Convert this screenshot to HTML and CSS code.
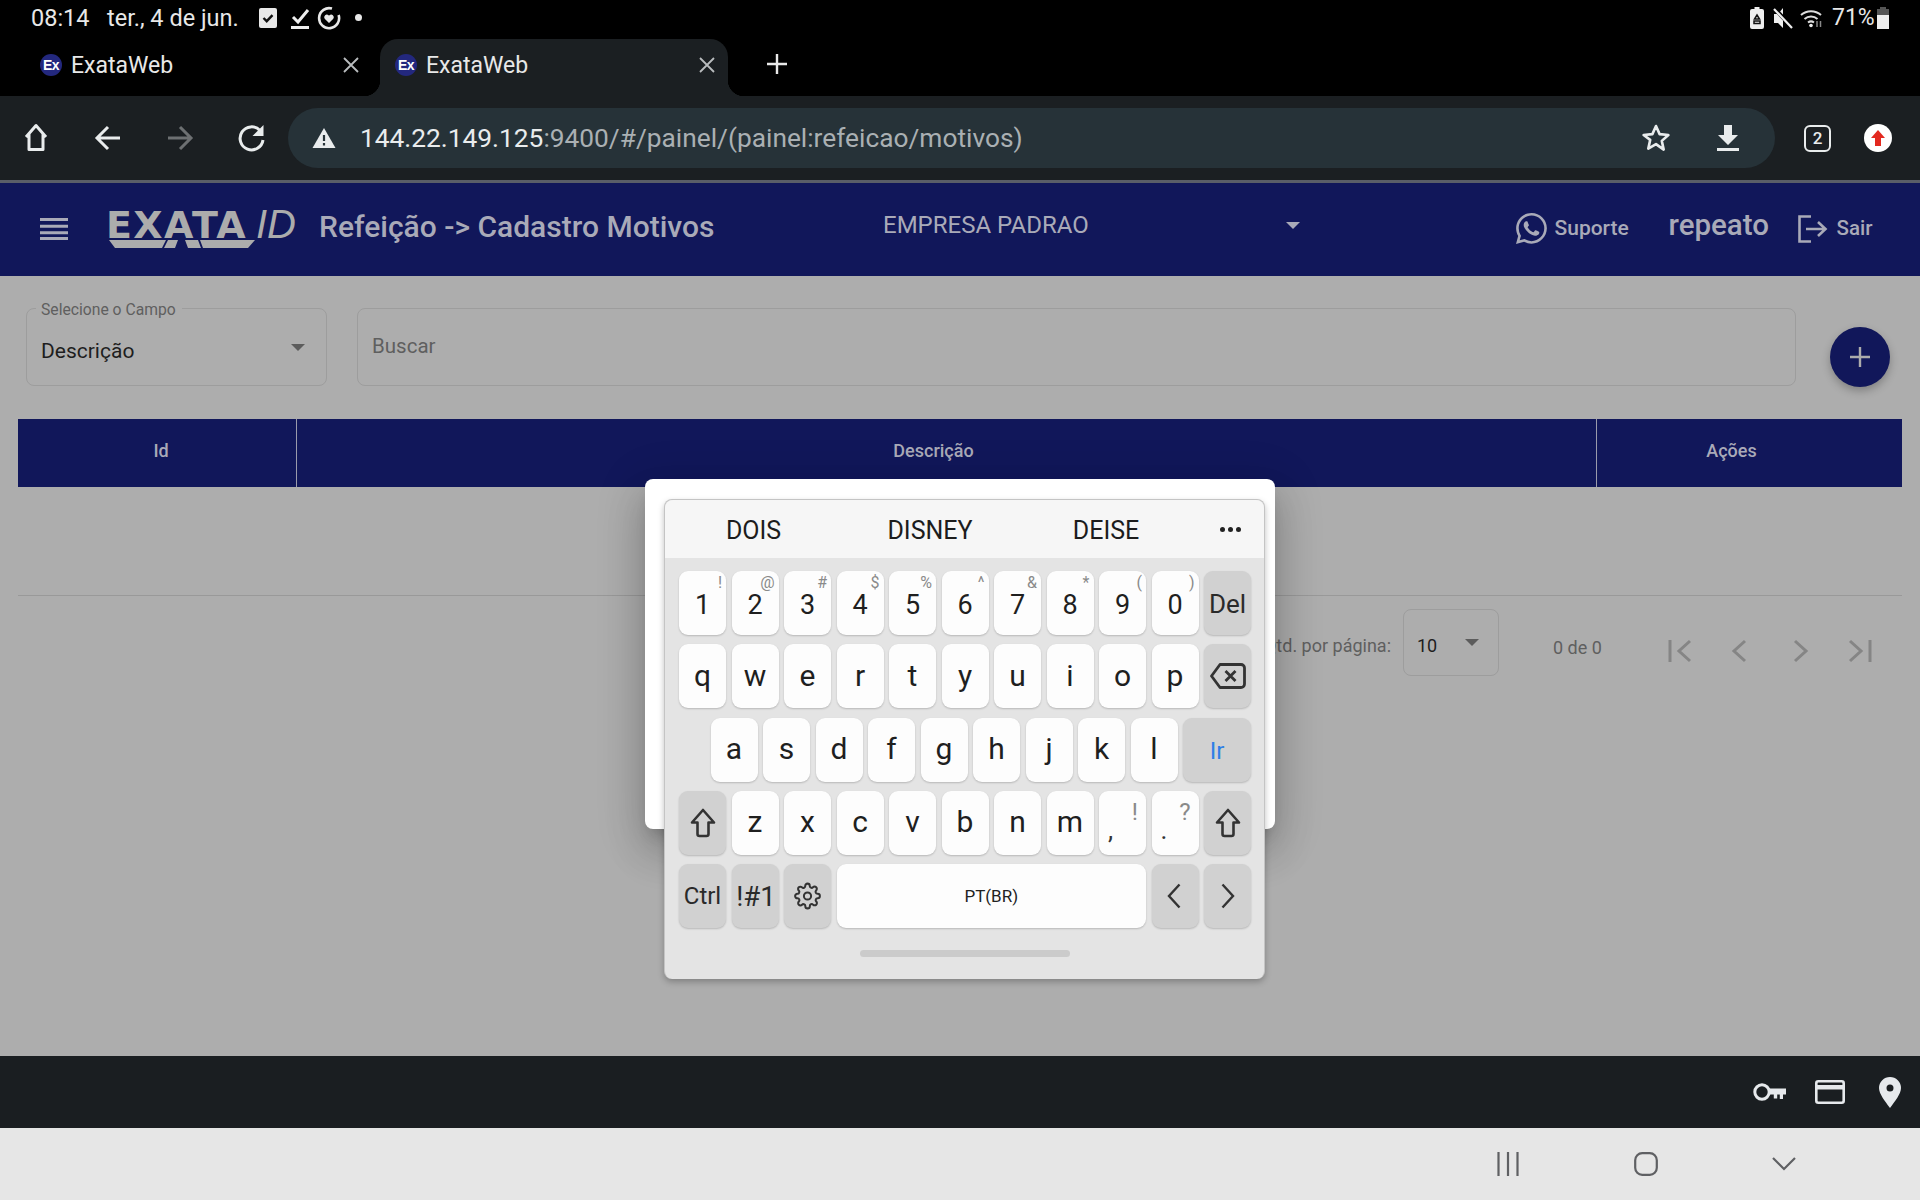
FILE: index.html
```html
<!DOCTYPE html>
<html lang="pt-BR">
<head>
<meta charset="utf-8">
<title>ExataWeb</title>
<link rel="stylesheet" href="styles.css">
</head>
<body>
<div class="device">
  <div class="chrome-top">
    <div class="status">
      <span class="st-time">08:14</span>
      <span class="st-date">ter., 4 de jun.</span>
      <svg class="st-ic" width="20" height="22" viewBox="0 0 20 22"><rect x="1" y="1" width="18" height="20" rx="2" fill="#e8e8e8"/><path d="M5.5 11l3.2 3.2 5.8-6" fill="none" stroke="#111" stroke-width="2.4"/></svg>
      <svg class="st-ic st-ic-b" width="20" height="24" viewBox="0 0 20 24"><path d="M3 11l5 5L18 4" fill="none" stroke="#eee" stroke-width="3"/><rect x="1" y="20" width="18" height="3" fill="#eee"/></svg>
      <svg class="st-ic st-ic-c" width="24" height="24" viewBox="0 0 24 24"><path d="M15 2.6A10 10 0 1 0 21.6 9" fill="none" stroke="#e8e8e8" stroke-width="2.6"/><path d="M12 17l-4.3-4.3a2.6 2.6 0 0 1 3.9-3.4l.4.5.4-.5a2.6 2.6 0 0 1 3.9 3.4z" fill="#e8e8e8"/></svg>
      <span class="st-dot"></span>
      <span class="st-spacer"></span>
      <svg class="st-ic2 st-r1" width="14" height="22" viewBox="0 0 14 22"><path d="M4.5 0h5v2h2.5a2 2 0 0 1 2 2v16a2 2 0 0 1-2 2H2a2 2 0 0 1-2-2V4a2 2 0 0 1 2-2h2.500z" fill="#eee"/><path d="M7 8l2.500 4h-5zM4 14h6v2.500H4z" fill="none" stroke="#111" stroke-width="1.500"/></svg>
      <svg class="st-ic2 st-r2" width="20" height="22" viewBox="0 0 20 22"><path d="M10 1v20l-5-5H1V7h4z" fill="#eee"/><path d="M1 1l18 19" stroke="#000" stroke-width="4"/><path d="M1 2l18 19" stroke="#eee" stroke-width="2.200"/></svg>
      <svg class="st-ic2 st-r3" width="24" height="20" viewBox="0 0 24 20"><path d="M1 7a15 15 0 0 1 20 0M4.500 11a10 10 0 0 1 13 0M8 14.500a5 5 0 0 1 6 0" fill="none" stroke="#ddd" stroke-width="2"/><circle cx="11" cy="17.500" r="1.800" fill="#eee"/><path d="M17 13v6M20.500 19v-6" stroke="#888" stroke-width="1.500"/></svg>
      <span class="st-batt">71%</span>
      <svg class="st-ic3" width="12" height="22" viewBox="0 0 12 22"><path d="M3 0h6v2h3v20H0V2h3z" fill="#555"/><path d="M0 8h12v14H0z" fill="#eee"/></svg>
    </div>
    <div class="tabs">
      <div class="tab">
        <span class="favicon">Ex</span>
        <span class="tab-title">ExataWeb</span>
        <svg class="tab-x" width="16" height="16" viewBox="0 0 16 16"><path d="M1 1l14 14M15 1L1 15" stroke="#b9bcbe" stroke-width="1.800"/></svg>
      </div>
      <div class="tab tab-active">
        <span class="favicon">Ex</span>
        <span class="tab-title">ExataWeb</span>
        <svg class="tab-x" width="16" height="16" viewBox="0 0 16 16"><path d="M1 1l14 14M15 1L1 15" stroke="#b9bcbe" stroke-width="1.800"/></svg>
      </div>
      <svg class="tab-plus" width="22" height="22" viewBox="0 0 22 22"><path d="M11 1v20M1 11h20" stroke="#e8e8e8" stroke-width="2.400"/></svg>
    </div>
  </div>

  <div class="toolbar">
    <svg class="tb-ic" width="72" height="34" viewBox="0 0 72 34"><path d="M26 16L36 4.500 46 16M29 13v15.500h14V13" fill="none" stroke="#e9eced" stroke-width="3" stroke-linejoin="round"/></svg>
    <svg class="tb-ic" width="72" height="34" viewBox="0 0 72 34"><path d="M48 17H26M36 6L25 17l11 11" fill="none" stroke="#e9eced" stroke-width="3"/></svg>
    <svg class="tb-ic" width="72" height="34" viewBox="0 0 72 34"><path d="M24 17h22M36 6l11 11-11 11" fill="none" stroke="#6d7072" stroke-width="3"/></svg>
    <svg class="tb-ic" width="72" height="34" viewBox="0 0 72 34"><path d="M44 9.500A11.500 11.500 0 1 0 47 19" fill="none" stroke="#e9eced" stroke-width="3"/><path d="M47.500 4v11h-11z" fill="#e9eced"/></svg>
    <div class="omnibox">
      <svg class="warn" width="24" height="22" viewBox="0 0 24 22"><path d="M12 1l11.500 20H.5z" fill="#e9eced"/><path d="M12 8v6M12 16v2.500" stroke="#263238" stroke-width="2.200"/></svg>
      <span class="url"><span class="url-host">144.22.149.125</span>:9400/#/painel/(painel:refeicao/motivos)</span>
      <svg class="star" width="30" height="30" viewBox="0 0 30 30"><path d="M15 3l3.600 8.100 8.800.9-6.600 5.900 1.900 8.700L15 21.100l-7.700 4.500 1.900-8.700L2.600 12l8.800-.9z" fill="none" stroke="#e9eced" stroke-width="2.600" stroke-linejoin="round"/></svg>
      <svg class="dl" width="24" height="28" viewBox="0 0 24 28"><path d="M8 1h8v10h6L12 21 2 11h6z" fill="#e9eced"/><rect x="1" y="24" width="22" height="3" fill="#e9eced"/></svg>
    </div>
    <div class="tabcount">2</div>
    <div class="avatar"><svg width="14" height="16" viewBox="0 0 14 16"><path d="M7 0l7 8h-4v8H4V8H0z" fill="#e3291f"/></svg></div>
  </div>
  <div class="divider"></div>

  <header class="app-header">
    <svg class="burger" width="28" height="22" viewBox="0 0 28 22"><path d="M0 1.500h28M0 8.200h28M0 14.800h28M0 20.500h28" stroke="#a9aab8" stroke-width="3"/></svg>
    <div class="logo">
      <div class="logo-main">
        <span class="logo-ex">EXATA</span>
        <svg class="logo-band" width="146" height="8" viewBox="0 0 146 8"><path d="M0 0h57l-4 8H6zM91 0h55l-7 8H94z" fill="#acacac"/><path d="M59 0l-4 8h11l3-8zM89 0l3 8H79l-3-8z" fill="#acacac"/></svg>
      </div>
      <span class="logo-id">ID</span>
    </div>
    <h1 class="app-title">Refeição -&gt; Cadastro Motivos</h1>
    <div class="company">EMPRESA PADRAO</div>
    <span class="caret caret-company"></span>
    <svg class="wa" width="31" height="31" viewBox="0 0 16 16"><path fill="#a9aab8" d="M13.601 2.326A7.854 7.854 0 0 0 7.994 0C3.627 0 .068 3.558.064 7.926c0 1.399.366 2.76 1.057 3.965L0 16l4.204-1.102a7.933 7.933 0 0 0 3.790.965h.004c4.368 0 7.926-3.558 7.930-7.930A7.898 7.898 0 0 0 13.600 2.326zM7.994 14.521a6.573 6.573 0 0 1-3.356-.920l-.240-.144-2.494.654.666-2.433-.156-.251a6.560 6.560 0 0 1-1.007-3.505c0-3.626 2.957-6.584 6.591-6.584a6.560 6.560 0 0 1 4.660 1.931 6.557 6.557 0 0 1 1.928 4.660c-.004 3.639-2.961 6.592-6.592 6.592zm3.615-4.934c-.197-.099-1.170-.578-1.353-.646-.182-.065-.315-.099-.445.099-.133.197-.513.646-.627.775-.114.133-.232.148-.430.050-.197-.100-.836-.308-1.592-.985-.590-.525-.985-1.175-1.103-1.372-.114-.198-.011-.304.088-.403.087-.088.197-.232.296-.346.100-.114.133-.198.198-.330.065-.134.034-.248-.015-.347-.050-.099-.445-1.076-.612-1.470-.160-.389-.323-.335-.445-.340-.114-.007-.247-.007-.380-.007a.729.729 0 0 0-.529.247c-.182.198-.691.677-.691 1.654 0 .977.710 1.916.810 2.049.098.133 1.394 2.132 3.383 2.992.470.205.840.326 1.129.418.475.152.904.129 1.246.080.380-.058 1.171-.480 1.338-.943.164-.464.164-.860.114-.943-.049-.084-.182-.133-.380-.232z"/></svg>
    <span class="suporte">Suporte</span>
    <span class="user">repeato</span>
    <svg class="exit" width="30" height="28" viewBox="0 0 30 28"><path d="M13 1.500H1.500v25H13" fill="none" stroke="#a9aab8" stroke-width="2.600"/><path d="M8 14h19M20 7l7.500 7-7.500 7" fill="none" stroke="#a9aab8" stroke-width="2.600"/></svg>
    <span class="sair">Sair</span>
  </header>

  <main class="page">
    <div class="filters">
      <div class="field field-select">
        <span class="field-label">Selecione o Campo</span>
        <span class="field-value">Descrição</span>
        <span class="caret caret-dim caret-field"></span>
      </div>
      <div class="field field-search"><span class="placeholder">Buscar</span></div>
      <button class="fab" type="button"><svg width="24" height="24" viewBox="0 0 24 24"><path d="M12 2v20M2 12h20" stroke="#acacac" stroke-width="2.400"/></svg></button>
    </div>
    <div class="thead">
      <div class="th th-id">Id</div>
      <div class="th th-mid">Descrição</div>
      <div class="th th-act">Ações</div>
    </div>
    <div class="tbody"></div>
    <div class="pager">
      <span class="pg-label">Qtd. por página:</span>
      <div class="pg-select"><span class="pg-num">10</span><span class="caret caret-dim"></span></div>
      <span class="pg-range">0 de 0</span>
      <svg class="pg-ic" width="24" height="24" viewBox="0 0 24 24"><path d="M2 1v22M22 2L11 12l11 10" fill="none" stroke="#858585" stroke-width="3"/></svg>
      <svg class="pg-ic" width="24" height="24" viewBox="0 0 24 24"><path d="M17 2L6 12l11 10" fill="none" stroke="#858585" stroke-width="3"/></svg>
      <svg class="pg-ic" width="24" height="24" viewBox="0 0 24 24"><path d="M7 2l11 10L7 22" fill="none" stroke="#858585" stroke-width="3"/></svg>
      <svg class="pg-ic" width="24" height="24" viewBox="0 0 24 24"><path d="M2 2l11 10L2 22M22 1v22" fill="none" stroke="#858585" stroke-width="3"/></svg>
    </div>
  </main>

  <footer class="bottom-bar">
    <svg class="bb-ic" width="34" height="20" viewBox="0 0 34 20"><circle cx="9" cy="10" r="7.200" fill="none" stroke="#e6e9ec" stroke-width="3"/><path d="M15.500 6.500H33V12.500h-3v4.500h-3.200V12.500h-2.600v4h-3.400v-4h-5.300" fill="#e6e9ec"/></svg>
    <svg class="bb-ic" width="30" height="24" viewBox="0 0 30 24"><rect x="1.300" y="1.300" width="27.400" height="21.400" rx="2" fill="none" stroke="#e6e9ec" stroke-width="2.600"/><rect x="1" y="5" width="28" height="4.500" fill="#e6e9ec"/></svg>
    <svg class="bb-ic" width="22" height="31" viewBox="0 0 22 31"><path fill-rule="evenodd" d="M11 0a11 11 0 0 1 11 11c0 6-6 13-11 20C6 24 0 17 0 11A11 11 0 0 1 11 0zm0 7.500a3.500 3.500 0 1 0 0 7 3.500 3.500 0 0 0 0-7z" fill="#e6e9ec"/></svg>
  </footer>

  <nav class="nav-bar">
    <svg width="22" height="24" viewBox="0 0 22 24"><path d="M1.500 0v24M11 0v24M20.500 0v24" stroke="#5f6063" stroke-width="2.200"/></svg>
    <svg width="24" height="24" viewBox="0 0 24 24"><rect x="1.200" y="1.200" width="21.600" height="21.600" rx="7" fill="none" stroke="#5f6063" stroke-width="2.200"/></svg>
    <svg width="24" height="14" viewBox="0 0 24 14"><path d="M1 1l11 11L23 1" fill="none" stroke="#5f6063" stroke-width="2.200"/></svg>
  </nav>

  <div class="dialog"></div>

  <div class="keyboard">
    <div class="candidates">
      <span class="cand cand-1">DOIS</span>
      <span class="cand cand-2">DISNEY</span>
      <span class="cand cand-3">DEISE</span>
      <span class="cand-more"><i></i><i></i><i></i></span>
    </div>
    <div class="keys">
      <div class="row row-num">
        <div class="key num">1<sup>!</sup></div>
        <div class="key num">2<sup>@</sup></div>
        <div class="key num">3<sup>#</sup></div>
        <div class="key num">4<sup>$</sup></div>
        <div class="key num">5<sup>%</sup></div>
        <div class="key num">6<sup>^</sup></div>
        <div class="key num">7<sup>&amp;</sup></div>
        <div class="key num">8<sup>*</sup></div>
        <div class="key num">9<sup>(</sup></div>
        <div class="key num">0<sup>)</sup></div>
        <div class="key fn num-del">Del</div>
      </div>
      <div class="row">
        <div class="key lt">q</div><div class="key lt">w</div><div class="key lt">e</div><div class="key lt">r</div><div class="key lt">t</div><div class="key lt">y</div><div class="key lt">u</div><div class="key lt">i</div><div class="key lt">o</div><div class="key lt">p</div>
        <div class="key fn"><svg width="36" height="26" viewBox="0 0 36 26"><path d="M10 1.500h21a3.500 3.500 0 0 1 3.500 3.500v16a3.500 3.500 0 0 1-3.500 3.500H10L1.500 13z" fill="none" stroke="#333" stroke-width="2.800" stroke-linejoin="round"/><path d="M15.500 8l10 10M25.500 8l-10 10" stroke="#333" stroke-width="2.800"/></svg></div>
      </div>
      <div class="row row-home">
        <div class="key lt">a</div><div class="key lt">s</div><div class="key lt">d</div><div class="key lt">f</div><div class="key lt">g</div><div class="key lt">h</div><div class="key lt">j</div><div class="key lt">k</div><div class="key lt">l</div>
        <div class="key fn key-go">Ir</div>
      </div>
      <div class="row">
        <div class="key fn"><svg width="26" height="30" viewBox="0 0 26 30"><path d="M13 2L24 14.500H18.500V26a2 2 0 0 1-2 2h-7a2 2 0 0 1-2-2V14.500H2z" fill="none" stroke="#333" stroke-width="2.600" stroke-linejoin="round"/></svg></div>
        <div class="key lt">z</div><div class="key lt">x</div><div class="key lt">c</div><div class="key lt">v</div><div class="key lt">b</div><div class="key lt">n</div><div class="key lt">m</div>
        <div class="key punct"><b class="punct-main">,</b><sup>!</sup></div>
        <div class="key punct"><b class="punct-main">.</b><sup>?</sup></div>
        <div class="key fn"><svg width="26" height="30" viewBox="0 0 26 30"><path d="M13 2L24 14.500H18.500V26a2 2 0 0 1-2 2h-7a2 2 0 0 1-2-2V14.500H2z" fill="none" stroke="#333" stroke-width="2.600" stroke-linejoin="round"/></svg></div>
      </div>
      <div class="row">
        <div class="key fn key-ctrl">Ctrl</div>
        <div class="key fn key-sym">!#1</div>
        <div class="key fn"><svg width="27" height="30" viewBox="0 0 24 24"><circle cx="12" cy="12" r="3.200" fill="none" stroke="#333" stroke-width="1.800"/><path fill="none" stroke="#333" stroke-width="1.800" d="M19.400 15a1.650 1.650 0 0 0 .33 1.820l.06.06a2 2 0 0 1 0 2.830 2 2 0 0 1-2.830 0l-.06-.06a1.650 1.650 0 0 0-1.820-.33 1.650 1.650 0 0 0-1 1.510V21a2 2 0 0 1-2 2 2 2 0 0 1-2-2v-.09A1.650 1.650 0 0 0 9 19.400a1.650 1.650 0 0 0-1.820.33l-.06.06a2 2 0 0 1-2.830 0 2 2 0 0 1 0-2.830l.06-.06a1.650 1.650 0 0 0 .33-1.820 1.650 1.650 0 0 0-1.510-1H3a2 2 0 0 1-2-2 2 2 0 0 1 2-2h.09A1.650 1.650 0 0 0 4.600 9a1.650 1.650 0 0 0-.33-1.820l-.06-.06a2 2 0 0 1 0-2.830 2 2 0 0 1 2.830 0l.06.06a1.650 1.650 0 0 0 1.820.33H9a1.650 1.650 0 0 0 1-1.510V3a2 2 0 0 1 2-2 2 2 0 0 1 2 2v.09a1.650 1.650 0 0 0 1 1.510 1.650 1.650 0 0 0 1.820-.33l.06-.06a2 2 0 0 1 2.830 0 2 2 0 0 1 0 2.830l-.06.06a1.650 1.650 0 0 0-.33 1.820V9a1.650 1.650 0 0 0 1.510 1H21a2 2 0 0 1 2 2 2 2 0 0 1-2 2h-.09a1.650 1.650 0 0 0-1.510 1z"/></svg></div>
        <div class="key key-space">PT(BR)</div>
        <div class="key fn key-left"><svg width="14" height="26" viewBox="0 0 14 26"><path d="M12.500 1.500L2 13l10.500 11.500" fill="none" stroke="#333" stroke-width="2.400"/></svg></div>
        <div class="key fn"><svg width="14" height="26" viewBox="0 0 14 26"><path d="M1.500 1.500L12 13 1.500 24.500" fill="none" stroke="#333" stroke-width="2.400"/></svg></div>
      </div>
    </div>
    <div class="handle"></div>
  </div>
</div>
</body>
</html>
```
FILE: styles.css
```css
* { box-sizing: border-box; }
html, body { margin: 0; padding: 0; }
body { width: 1920px; height: 1200px; overflow: hidden; font-family: Roboto, "Liberation Sans", sans-serif; background: #000; }
.device { position: relative; width: 1920px; height: 1200px; display: flex; flex-direction: column; overflow: hidden; }

/* top chrome */
.chrome-top { height: 96px; background: #000; color: #e8e8e8; }
.status { height: 39px; display: flex; align-items: center; padding: 0 31px 4px; font-size: 23.500px; }
.st-time { width: 76px; }
.st-date { width: 151px; white-space: nowrap; }
.st-ic { margin-right: 12px; }
.st-ic-b { margin-right: 7px; }
.st-ic-c { margin-right: 9px; }
.st-dot { width: 7px; height: 7px; border-radius: 50%; background: #e8e8e8; margin-left: 5px; }
.st-spacer { flex: 1; }
.st-r1 { margin-right: 9px; }
.st-r2 { margin-right: 7px; }
.st-r3 { margin-right: 8px; }
.st-batt { width: 45px; font-size: 23px; }
.tabs { height: 57px; display: flex; align-items: center; }
.tab { position: relative; width: 380px; height: 57px; display: flex; align-items: center; padding: 0 0 5px 40px; }
.tab-active { width: 348px; background: #1b1f22; border-radius: 18px 18px 0 0; padding-left: 15px; }
.tab-active::before, .tab-active::after { content: ""; position: absolute; bottom: 0; width: 16px; height: 16px; }
.tab-active::before { left: -16px; background: radial-gradient(circle at 0 0, transparent 16px, #1b1f22 16.5px); }
.tab-active::after { right: -16px; background: radial-gradient(circle at 100% 0, transparent 16px, #1b1f22 16.5px); }
.favicon { flex: none; width: 22px; height: 22px; border-radius: 50%; background: #23287e; color: #fff; font: bold 14px/22px "Liberation Sans", sans-serif; text-align: center; letter-spacing: -.5px; }
.tab-title { flex: none; margin-left: 9px; font-size: 23px; width: 272px; }
.tab-active .tab-title { width: 273px; }
.tab-x { flex: none; }
.tab-plus { margin-left: 38px; margin-top: -7px; }

/* toolbar */
.toolbar { height: 84px; background: #1b1f22; display: flex; align-items: center; }
.tb-ic { flex: none; }
.omnibox { width: 1487px; height: 60px; background: #263238; border-radius: 30px; display: flex; align-items: center; padding-left: 24px; }
.warn { flex: none; }
.url { margin-left: 24px; width: 1281px; font-size: 26.300px; color: #aab0b3; white-space: nowrap; }
.url-host { color: #e9eced; }
.star { flex: none; }
.dl { flex: none; margin-left: 45px; }
.tabcount { width: 27px; height: 27px; margin-left: 29px; border: 2.500px solid #e9eced; border-radius: 6px; color: #e9eced; font-size: 17px; font-weight: 500; display: flex; align-items: center; justify-content: center; }
.avatar { width: 28px; height: 28px; margin-left: 33px; border-radius: 50%; background: #fff; display: flex; align-items: center; justify-content: center; }
.divider { height: 3px; background: #5a5e68; }

/* app header */
.app-header { height: 93px; background: #11175a; color: #a9aab8; display: flex; align-items: center; padding: 0 0 3px 40px; }
.burger { flex: none; margin-top: 2px; }
.logo { display: flex; align-items: flex-start; margin-left: 38px; width: 213px; color: #acacac; margin-top: 2px; }
.logo-main { display: flex; flex-direction: column; width: 150px; }
.logo-ex { font: bold 38px/30px "DejaVu Sans", sans-serif; letter-spacing: 1.400px; }
.logo-band { margin-left: 3px; }
.logo-id { font: italic 40px/28px "Liberation Sans", sans-serif; margin-top: 0; }
.app-title { margin: 0 0 4px; font-size: 30px; font-weight: 500; white-space: nowrap; width: 564px; }
.company { font-size: 24px; width: 402px; margin-top: -7px; }
.caret { display: inline-block; width: 0; height: 0; border-left: 7px solid transparent; border-right: 7px solid transparent; border-top: 7px solid #a9aab8; }
.caret-company { margin-top: -5px; margin-left: 1px; }
.wa { flex: none; margin-left: 215.500px; }
.suporte { margin-left: 8px; font-size: 21px; font-weight: 500; width: 114px; }
.user { font-size: 29.500px; font-weight: 500; width: 129px; margin-top: -7px; }
.exit { flex: none; margin-top: 1px; }
.sair { margin-left: 9px; font-size: 20.500px; font-weight: 500; }

/* page */
.page { height: 780px; background: #adadad; color: #222; }
.filters { height: 78px; margin-top: 32px; padding-left: 26px; display: flex; align-items: flex-start; }
.field { position: relative; height: 78px; border: 1px solid #9d9d9d; border-radius: 8px; }
.field-select { width: 301px; padding: 30px 14px 0; }
.field-label { position: absolute; top: -9px; left: 9px; padding: 0 6px 0 5px; background: #adadad; font-size: 15.700px; line-height: 20px; color: #5f5f5f; }
.field-value { font-size: 21px; color: #1e1e1e; }
.caret-dim { border-top-color: #5c5c5c; }
.caret-field { position: absolute; right: 21px; top: 35px; }
.field-search { width: 1439px; margin-left: 30px; padding: 25px 14px 0; font-size: 20.500px; color: #5f5f5f; }
.fab { width: 60px; height: 60px; margin: 19px 0 0 34px; border: 0; border-radius: 50%; background: #11175a; box-shadow: 0 4px 8px rgba(0,0,0,.25); display: flex; align-items: center; justify-content: center; }
.thead { display: grid; grid-template-columns: 278px 1301px 305px; height: 68px; margin: 33px 18px 0; background: #11175a; }
.th { display: flex; align-items: center; justify-content: center; color: #a9aab8; font-size: 18px; font-weight: 500; padding-bottom: 6px; }
.th-id { padding-left: 8px; }
.th-mid { border-left: 1px solid #9a9bac; border-right: 1px solid #9a9bac; padding-right: 26px; }
.th-act { padding-right: 36px; }
.tbody { height: 109px; margin: 0 18px; border-bottom: 1px solid #999; }
.pager { height: 80px; display: flex; align-items: center; justify-content: flex-end; padding: 13px 0 0; font-size: 18px; color: #5f5f5f; }
.pg-label { margin-right: 12px; margin-top: 6px; }
.pg-select { width: 96px; height: 67px; border: 1px solid #9d9d9d; border-radius: 8px; display: flex; align-items: center; gap: 28px; padding-left: 13px; color: #1e1e1e; margin-right: 54px; }
.pg-num { margin-top: 5px; }
.pg-range { width: 115px; font-size: 18px; margin-top: 10px; }
.pg-ic { margin-right: 36px; margin-top: 16px; }
.pg-ic:last-child { margin-right: 48px; }

/* bottom */
.bottom-bar { height: 72px; background: #1a1e21; display: flex; align-items: center; justify-content: flex-end; }
.bb-ic { flex: none; margin-right: 28.500px; }
.bb-ic:nth-child(2) { margin-right: 34px; }
.bb-ic:last-child { margin-right: 19px; }
.nav-bar { height: 72px; background: #e6e6e6; display: flex; align-items: center; padding-left: 1497px; gap: 114.500px; }

/* dialog + keyboard overlays */
.dialog { position: absolute; left: 645px; top: 479px; width: 630px; height: 350px; background: #fff; border-radius: 8px; box-shadow: 0 11px 15px -7px rgba(0,0,0,.2), 0 24px 38px 3px rgba(0,0,0,.14), 0 9px 46px 8px rgba(0,0,0,.12); }
.keyboard { position: absolute; left: 664px; top: 499px; width: 601px; height: 480px; background: #e4e4e4; border: 1px solid #c4c4c4; border-width: 1px 1px 0; border-radius: 8px; box-shadow: 0 3px 6px rgba(0,0,0,.25); }
.candidates { position: relative; height: 58px; padding-top: 3px; background: #f6f6f6; border-radius: 8px 8px 0 0; font-size: 25px; color: #1c1c1c; display: flex; align-items: center; }
.cand { width: 176px; text-align: center; }
.cand-1 { margin-left: 21px; width: 135px; }
.cand-2 { margin-left: 21px; }
.cand-more { display: flex; gap: 3px; margin-left: 26px; margin-top: -2px; }
.cand-more i { width: 5px; height: 5px; border-radius: 50%; background: #222; }
.keys { padding: 13px 13px 0 14px; display: flex; flex-direction: column; gap: 9.250px; }
.row { display: flex; gap: 5.500px; height: 64px; }
.row-home { padding-left: 31.500px; }
.key { position: relative; width: 47px; height: 64px; background: #fdfdfd; border-radius: 9px; box-shadow: 0 1px 2px rgba(0,0,0,.2); display: flex; align-items: center; justify-content: center; font-size: 30px; color: #1f1f1f; }
.key.lt { padding-bottom: 2px; }
.key.num { font-size: 27px; padding-top: 3px; }
.key.num-del { padding-top: 1px; }
.key sup { position: absolute; top: 3px; right: 4px; font-size: 16px; line-height: 18px; color: #8a8a8a; }
.key.fn { background: #d1d1d1; font-size: 26px; color: #2a2a2a; }
.key.key-go { width: 68px; color: #2f7fe6; font-size: 24px; padding-top: 2px; }
.key.key-ctrl { font-size: 24px; }
.key.key-sym { font-size: 27.500px; padding-left: 2px; }
.key.key-left { padding-right: 2px; }
.key-space { width: 309.500px; font-size: 17px; color: #222; }
.punct-main { position: absolute; left: 9px; bottom: 12px; font-weight: 400; font-size: 26px; line-height: 26px; color: #333; }
.key.punct sup { top: 8px; right: 8px; font-size: 24px; line-height: 26px; }
.handle { width: 210px; height: 7px; border-radius: 4px; background: #cbcbcb; margin: 22px 0 0 195px; }
```
